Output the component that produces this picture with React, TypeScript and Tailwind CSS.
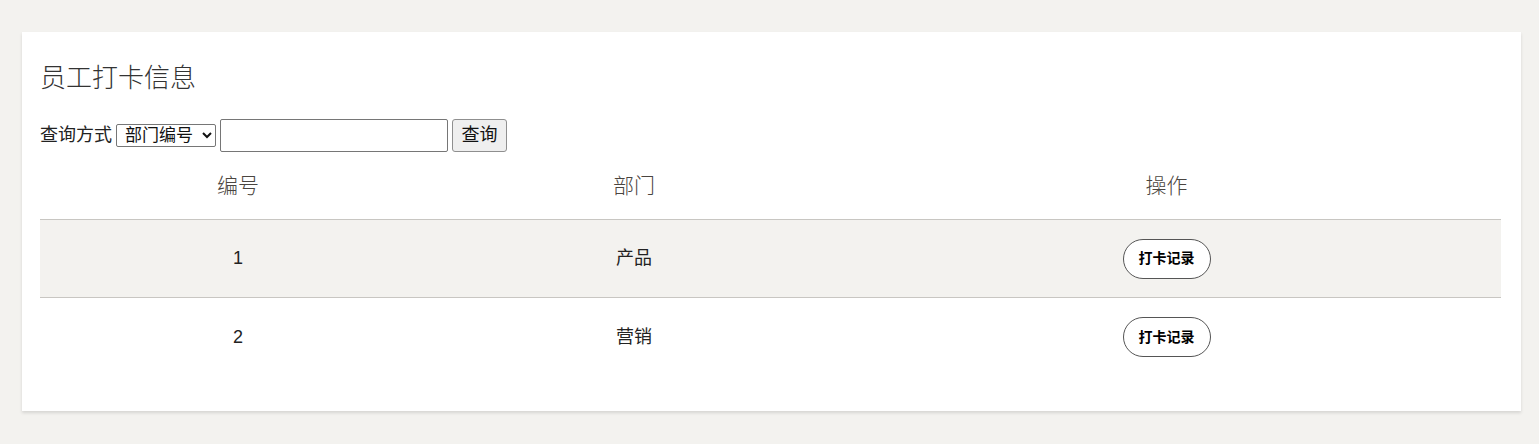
const rows = [
  { id: 1, dept: '产品' },
  { id: 2, dept: '营销' },
];

const cjk = "font-['Liberation_Sans','Noto_Sans_CJK_SC',sans-serif]";

export default function App() {
  return (
    <div className={`min-h-[444px] bg-[#f3f2ef] pl-[22px] pr-[18px] pt-[32px] ${cjk}`}>
      <div className="bg-white pl-[18px] pr-[20px] pt-[29px] pb-[35px] shadow-[0_2px_3px_rgba(0,0,0,0.12)]">
        <h1 className="text-[26px] leading-[34px] text-[#333] font-light">员工打卡信息</h1>
        <SearchBar />
        <Table />
      </div>
    </div>
  );
}

function SearchBar() {
  return (
    <div className="mt-[24px] flex items-center gap-[4px] text-[18px] text-[#222]">
      <span>查询方式</span>
      <select className="h-[23px] w-[100px] border border-[#767676] rounded-[2px] bg-white px-[4px] text-[17px] leading-none text-[#111]">
        <option>部门编号</option>
      </select>
      <input className="h-[33px] w-[228px] border border-[#767676] rounded-[2px] bg-white px-2" />
      <button className="h-[33px] w-[55px] border border-[#8f8f8f] rounded-[3px] bg-[#efefef] text-[18px] text-[#111]">
        查询
      </button>
    </div>
  );
}

function Table() {
  return (
    <div className="mt-[7px]">
      <div className="grid grid-cols-[396px_396px_1fr] h-[61px] items-center pb-[7px] border-b border-[#c8c6c2] text-[21px] text-[#4a4540] text-center font-light">
        <div>编号</div>
        <div>部门</div>
        <div>操作</div>
      </div>
      {rows.map((r, i) => (
        <div
          key={r.id}
          className={`grid grid-cols-[396px_396px_1fr] h-[78px] items-center text-center text-[18px] text-[#222] ${
            i === 0 ? 'bg-[#f3f2ef] border-b border-[#c8c6c2]' : 'bg-white'
          }`}
        >
          <div>{r.id}</div>
          <div>{r.dept}</div>
          <div className="flex justify-center">
            <button className="h-[40px] w-[88px] rounded-full border border-[#555] bg-white text-[14px] font-bold text-black">
              打卡记录
            </button>
          </div>
        </div>
      ))}
    </div>
  );
}
